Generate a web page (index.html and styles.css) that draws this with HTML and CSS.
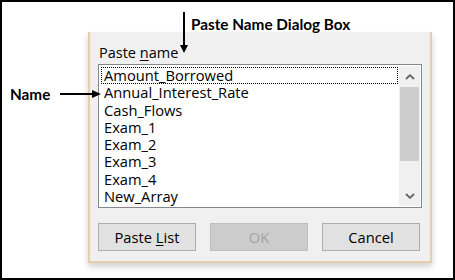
FILE: index.html
```html
<!DOCTYPE html>
<html>
<head>
<meta charset="utf-8">
<link rel="stylesheet" href="styles.css">
</head>
<body>
<div class="frame">
  <div class="dialog">
    <div class="label">Paste <u>n</u>ame</div>
    <div class="listbox">
      <ul class="items">
        <li class="focused">Amount_Borrowed</li>
        <li>Annual_Interest_Rate</li>
        <li>Cash_Flows</li>
        <li>Exam_1</li>
        <li>Exam_2</li>
        <li>Exam_3</li>
        <li>Exam_4</li>
        <li>New_Array</li>
      </ul>
      <div class="scrollbar">
        <div class="sb-btn">
          <svg width="10" height="6" viewBox="0 0 10 6"><path d="M1 5 L5 1.2 L9 5" fill="none" stroke="#606060" stroke-width="1.8"/></svg>
        </div>
        <div class="sb-track"><div class="sb-thumb"></div></div>
        <div class="sb-btn">
          <svg width="10" height="6" viewBox="0 0 10 6"><path d="M1 1 L5 4.8 L9 1" fill="none" stroke="#606060" stroke-width="1.8"/></svg>
        </div>
      </div>
    </div>
    <div class="buttons">
      <div class="btn"><span>Paste <u>L</u>ist</span></div>
      <div class="btn disabled"><span>OK</span></div>
      <div class="btn"><span>Cancel</span></div>
    </div>
  </div>

  <div class="anno anno-top">Paste Name Dialog Box</div>
  <div class="anno anno-name">Name</div>
  <svg class="arrow arrow-down" width="10" height="42" viewBox="0 0 10 42">
    <line x1="5" y1="0" x2="5" y2="36" stroke="#000" stroke-width="2"/>
    <path d="M1 33 L5 41 L9 33 Z" fill="#000"/>
  </svg>
  <svg class="arrow arrow-right" width="42" height="10" viewBox="0 0 42 10">
    <line x1="0" y1="5" x2="34" y2="5" stroke="#000" stroke-width="2"/>
    <path d="M32 1 L41 5 L32 9 Z" fill="#000"/>
  </svg>
</div>
</body>
</html>
```

FILE: styles.css
```css
html, body {
  margin: 0;
  padding: 0;
  background: #fff;
}
.frame {
  position: relative;
  box-sizing: border-box;
  width: 455px;
  height: 280px;
  border: 2px solid #000;
  overflow: hidden;
  padding: 30px 0 0 86px;
}
.dialog {
  box-sizing: border-box;
  width: 344px;
  height: 231px;
  background: #f0f0f0;
  border-left: 2px solid #e6cfae;
  border-right: 2px solid #e6cfae;
  border-bottom: 2px solid #e6cfae;
  box-shadow: 0 4px 6px rgba(0,0,0,0.18);
  padding: 11px 8px 0 8px;
  font-family: "Open Sans", "Noto Sans", sans-serif;
  color: #000;
  display: flex;
  flex-direction: column;
}
.label {
  font-size: 14.5px;
  line-height: 20px;
  height: 21px;
  padding-left: 1px;
}
.label u, .btn u {
  text-decoration-thickness: 1px;
  text-underline-offset: 2px;
}
.listbox {
  box-sizing: border-box;
  width: 324px;
  height: 144px;
  border: 1px solid #828790;
  background: #fff;
  display: flex;
  padding: 2px 1px 2px 2px;
}
.items {
  list-style: none;
  margin: 0;
  padding: 0;
  flex: 1;
  font-size: 14.7px;
}
.items li {
  height: 17.3px;
  line-height: 17.3px;
  padding-left: 3px;
  white-space: nowrap;
}
.items li.focused {
  outline: 1px dotted #000;
  outline-offset: -1px;
  margin-right: 1px;
}
.scrollbar {
  width: 21px;
  background: #f0f0f0;
  display: flex;
  flex-direction: column;
  margin: -1px 0 -1px 0;
}
.sb-btn {
  height: 21px;
  display: flex;
  align-items: center;
  justify-content: center;
}
.sb-track {
  flex: 1;
  padding: 0 1px;
  display: flex;
  flex-direction: column;
}
.sb-thumb {
  height: 74px;
  background: #cdcdcd;
}
.buttons {
  display: flex;
  gap: 14px;
  margin-top: 15px;
}
.btn {
  box-sizing: border-box;
  width: 98px;
  height: 28px;
  background: #e1e1e1;
  border: 1px solid #adadad;
  font-size: 14.7px;
  display: flex;
  align-items: center;
  justify-content: center;
  white-space: pre;
}
.btn.disabled {
  background: #cccccc;
  border-color: #bfbfbf;
  color: #a3a3a3;
}
.anno {
  position: absolute;
  font-family: "Lato", "Liberation Sans", sans-serif;
  font-weight: bold;
  font-size: 15.3px;
  color: #000;
  line-height: 20px;
}
.anno-top {
  left: 189px;
  top: 12px;
}
.anno-name {
  left: 8px;
  top: 82px;
}
.arrow {
  position: absolute;
}
.arrow-down {
  left: 177px;
  top: 10px;
}
.arrow-right {
  left: 58px;
  top: 87px;
}
```
